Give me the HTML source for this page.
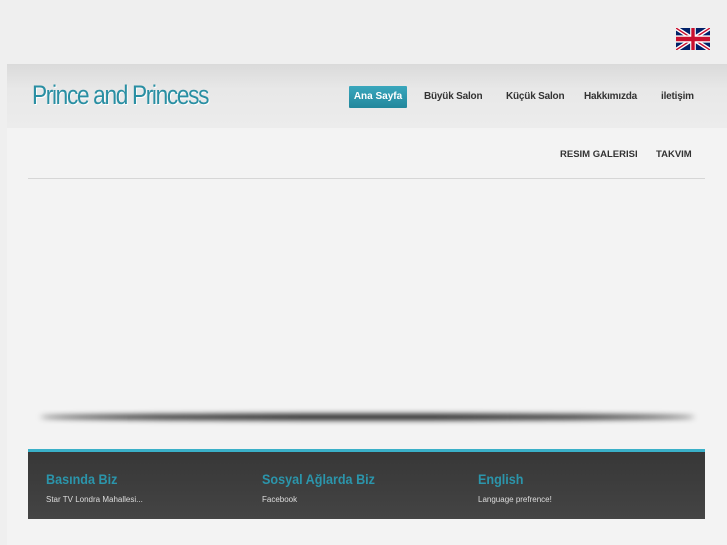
<!DOCTYPE html>
<html><head><meta charset="utf-8"><style>
body{margin:0;width:727px;height:545px;background:#efefef;font-family:"Liberation Sans",sans-serif;position:relative;overflow:hidden}
.main{position:absolute;left:7px;top:64px;width:720px;height:481px;background:#f3f3f3}
.hdr{position:absolute;left:7px;top:64px;width:720px;height:64px;background:linear-gradient(#dadada,#e8e8e8 40%,#ececec)}
.logo{position:absolute;left:32px;top:80px;font-size:27px;color:#2a8fa3;letter-spacing:-1.6px;text-shadow:1px 1px 0 #fff;transform:scaleX(0.84);transform-origin:left top;white-space:nowrap}
.nav{position:absolute;top:91px;font-size:10px;font-weight:bold;color:#333;letter-spacing:-0.2px}
.act{position:absolute;left:349px;top:86px;width:58px;height:22px;background:linear-gradient(#3aa7bd,#22879c);color:#fff;font-size:10px;font-weight:bold;text-align:center;line-height:22px;border-radius:1px}
.sub{position:absolute;top:149px;font-size:9.5px;font-weight:bold;color:#333}
.line{position:absolute;left:28px;top:178px;width:677px;height:1px;background:#d6d6d6}
.shadow{position:absolute;left:40px;top:414px;width:655px;height:6px;border-radius:50%;background:#111;filter:blur(3px)}
.foot{position:absolute;left:28px;top:449px;width:677px;height:70px;background:linear-gradient(#373737,#444);border-top:3px solid #3ab0c8;box-sizing:border-box}
.ft{position:absolute;top:19px;font-size:14px;font-weight:bold;color:#2b95ab;transform:scaleX(0.9);transform-origin:left top;white-space:nowrap}
.fs{position:absolute;top:43px;font-size:8px;color:#ddd}
</style></head><body>
<div class="main"></div><div class="hdr"></div>
<svg style="position:absolute;left:676px;top:28px" width="34" height="22" viewBox="0 0 60 30" preserveAspectRatio="none">
<rect width="60" height="30" fill="#012169"/>
<path d="M0,0L60,30M60,0L0,30" stroke="#fff" stroke-width="6"/>
<path d="M0,0L60,30M60,0L0,30" stroke="#C8102E" stroke-width="2"/>
<path d="M30,0V30M0,15H60" stroke="#fff" stroke-width="10"/>
<path d="M30,0V30M0,15H60" stroke="#C8102E" stroke-width="6"/>
</svg>
<div class="logo">Prince and Princess</div>
<div class="act">Ana Sayfa</div>
<div class="nav" style="left:424px">Büyük Salon</div>
<div class="nav" style="left:506px">Küçük Salon</div>
<div class="nav" style="left:584px">Hakkımızda</div>
<div class="nav" style="left:661px">iletişim</div>
<div class="sub" style="left:560px">RESIM GALERISI</div>
<div class="sub" style="left:656px">TAKVIM</div>
<div class="line"></div>
<div class="shadow"></div>
<div class="foot">
<div class="ft" style="left:18px">Basında Biz</div>
<div class="ft" style="left:234px">Sosyal Ağlarda Biz</div>
<div class="ft" style="left:450px">English</div>
<div class="fs" style="left:18px">Star TV Londra Mahallesi...</div>
<div class="fs" style="left:234px">Facebook</div>
<div class="fs" style="left:450px">Language prefrence!</div>
</div>
</body></html>
